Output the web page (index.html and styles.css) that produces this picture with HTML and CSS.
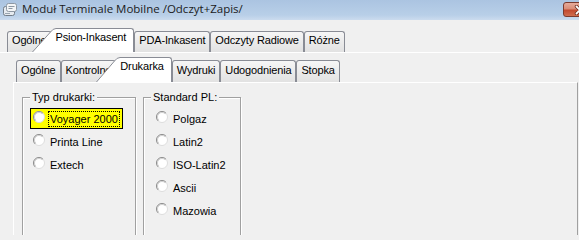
FILE: index.html
```html
<!DOCTYPE html>
<html lang="pl">
<head>
<meta charset="utf-8">
<title>Moduł Terminale Mobilne</title>
<link rel="stylesheet" href="styles.css">
</head>
<body>
<div class="window">
  <div class="titlebar">
    <svg class="app-icon" viewBox="0 0 16 16" aria-hidden="true">
      <rect x="1.5" y="4.5" width="11" height="9" rx="2" fill="#e6ebf0" stroke="#737d88"/>
      <rect x="4.5" y="1.5" width="10" height="8" rx="2" fill="#f3f5f7" stroke="#8d98a4"/>
      <path d="M6.5 4.5h6M6.5 6.5h4" stroke="#8d98a4"/>
      <path d="M3 11.5h5" stroke="#9aa5b0"/>
    </svg>
    <span class="title">Moduł Terminale Mobilne /Odczyt+Zapis/</span>
    <div class="close-btn">
      <svg width="12" height="10" viewBox="0 0 12 10" aria-hidden="true">
        <path d="M2.5,1.5 L9.5,8.5 M9.5,1.5 L2.5,8.5" stroke="#6b2c20" stroke-width="3.4" stroke-linecap="round"/>
        <path d="M2.5,1.5 L9.5,8.5 M9.5,1.5 L2.5,8.5" stroke="#fff" stroke-width="1.8" stroke-linecap="round"/>
      </svg>
    </div>
  </div>

  <div class="pagecontrol">
    <div class="tabs tabs-top">
      <div class="tab">Ogólne</div>
      <div class="tab-active">
        <svg class="tab-slant" width="24" height="24" viewBox="0 0 24 24" aria-hidden="true">
          <path d="M0.5,24 L18.5,4 Q21,0.5 24,0.5 L24,24 Z" fill="#fff"/>
          <path d="M0.5,24 L18.5,4 Q21,0.5 24,0.5" fill="none" stroke="#898c95"/>
        </svg>
        <span class="tab-label">Psion-Inkasent</span>
      </div>
      <div class="tab">PDA-Inkasent</div>
      <div class="tab">Odczyty Radiowe</div>
      <div class="tab">Różne</div>
    </div>

    <div class="outer-panel">
      <div class="pagecontrol inner">
        <div class="tabs tabs-sub">
          <div class="tab">Ogólne</div>
          <div class="tab">Kontrolne</div>
          <div class="tab-active">
            <svg class="tab-slant" width="24" height="25" viewBox="0 0 24 25" aria-hidden="true">
              <path d="M0.5,25 L18.5,4 Q21,0.5 24,0.5 L24,25 Z" fill="#fff"/>
              <path d="M0.5,25 L18.5,4 Q21,0.5 24,0.5" fill="none" stroke="#898c95"/>
            </svg>
            <span class="tab-label">Drukarka</span>
          </div>
          <div class="tab">Wydruki</div>
          <div class="tab">Udogodnienia</div>
          <div class="tab">Stopka</div>
        </div>

        <div class="inner-panel">
          <div class="groups">
            <fieldset class="group group-printer">
              <legend class="group-title">Typ drukarki:</legend>
              <div class="opt-row">
                <label class="opt opt-hl">
                  <svg class="radio" viewBox="0 0 12 12" aria-hidden="true"><circle cx="6" cy="6" r="5.5" fill="#fff" stroke="#dcdcdc"/><path d="M2.1,9.9 A5.5,5.5 0 0 1 9.9,2.1" fill="none" stroke="#8c8c8c"/><path d="M2.8,9.2 A4.5,4.5 0 0 1 9.2,2.8" fill="none" stroke="#cfcfcf"/></svg>
                  <span class="opt-text focus">Voyager 2000</span>
                </label>
              </div>
              <div class="opt-row">
                <label class="opt">
                  <svg class="radio" viewBox="0 0 12 12" aria-hidden="true"><circle cx="6" cy="6" r="5.5" fill="#fff" stroke="#dcdcdc"/><path d="M2.1,9.9 A5.5,5.5 0 0 1 9.9,2.1" fill="none" stroke="#8c8c8c"/><path d="M2.8,9.2 A4.5,4.5 0 0 1 9.2,2.8" fill="none" stroke="#cfcfcf"/></svg>
                  <span class="opt-text">Printa Line</span>
                </label>
              </div>
              <div class="opt-row">
                <label class="opt">
                  <svg class="radio" viewBox="0 0 12 12" aria-hidden="true"><circle cx="6" cy="6" r="5.5" fill="#fff" stroke="#dcdcdc"/><path d="M2.1,9.9 A5.5,5.5 0 0 1 9.9,2.1" fill="none" stroke="#8c8c8c"/><path d="M2.8,9.2 A4.5,4.5 0 0 1 9.2,2.8" fill="none" stroke="#cfcfcf"/></svg>
                  <span class="opt-text">Extech</span>
                </label>
              </div>
            </fieldset>

            <fieldset class="group group-std">
              <legend class="group-title">Standard PL:</legend>
              <div class="opt-row">
                <label class="opt">
                  <svg class="radio" viewBox="0 0 12 12" aria-hidden="true"><circle cx="6" cy="6" r="5.5" fill="#fff" stroke="#dcdcdc"/><path d="M2.1,9.9 A5.5,5.5 0 0 1 9.9,2.1" fill="none" stroke="#8c8c8c"/><path d="M2.8,9.2 A4.5,4.5 0 0 1 9.2,2.8" fill="none" stroke="#cfcfcf"/></svg>
                  <span class="opt-text">Polgaz</span>
                </label>
              </div>
              <div class="opt-row">
                <label class="opt">
                  <svg class="radio" viewBox="0 0 12 12" aria-hidden="true"><circle cx="6" cy="6" r="5.5" fill="#fff" stroke="#dcdcdc"/><path d="M2.1,9.9 A5.5,5.5 0 0 1 9.9,2.1" fill="none" stroke="#8c8c8c"/><path d="M2.8,9.2 A4.5,4.5 0 0 1 9.2,2.8" fill="none" stroke="#cfcfcf"/></svg>
                  <span class="opt-text">Latin2</span>
                </label>
              </div>
              <div class="opt-row">
                <label class="opt">
                  <svg class="radio" viewBox="0 0 12 12" aria-hidden="true"><circle cx="6" cy="6" r="5.5" fill="#fff" stroke="#dcdcdc"/><path d="M2.1,9.9 A5.5,5.5 0 0 1 9.9,2.1" fill="none" stroke="#8c8c8c"/><path d="M2.8,9.2 A4.5,4.5 0 0 1 9.2,2.8" fill="none" stroke="#cfcfcf"/></svg>
                  <span class="opt-text">ISO-Latin2</span>
                </label>
              </div>
              <div class="opt-row">
                <label class="opt">
                  <svg class="radio" viewBox="0 0 12 12" aria-hidden="true"><circle cx="6" cy="6" r="5.5" fill="#fff" stroke="#dcdcdc"/><path d="M2.1,9.9 A5.5,5.5 0 0 1 9.9,2.1" fill="none" stroke="#8c8c8c"/><path d="M2.8,9.2 A4.5,4.5 0 0 1 9.2,2.8" fill="none" stroke="#cfcfcf"/></svg>
                  <span class="opt-text">Ascii</span>
                </label>
              </div>
              <div class="opt-row">
                <label class="opt">
                  <svg class="radio" viewBox="0 0 12 12" aria-hidden="true"><circle cx="6" cy="6" r="5.5" fill="#fff" stroke="#dcdcdc"/><path d="M2.1,9.9 A5.5,5.5 0 0 1 9.9,2.1" fill="none" stroke="#8c8c8c"/><path d="M2.8,9.2 A4.5,4.5 0 0 1 9.2,2.8" fill="none" stroke="#cfcfcf"/></svg>
                  <span class="opt-text">Mazowia</span>
                </label>
              </div>
            </fieldset>
          </div>
        </div>
      </div>
    </div>
  </div>
</div>
</body>
</html>
```

FILE: styles.css
```css
html, body {
  margin: 0;
  padding: 0;
}

body {
  width: 579px;
  height: 235px;
  overflow: hidden;
  background: #f0f0f0;
  font-family: "Liberation Sans", Arial, sans-serif;
  font-size: 11px;
  color: #000;
}

.window {
  width: 579px;
}

/* ---------- title bar ---------- */
.titlebar {
  display: flex;
  align-items: flex-start;
  height: 20px;
  background: linear-gradient(to bottom, #abc4e1 0%, #b8cfe8 75%, #cbdbee 100%);
}

.app-icon {
  flex: none;
  width: 16px;
  height: 16px;
  margin: 2px 0 0 2px;
}

.title {
  margin-left: 4px;
  font-family: "Open Sans", "Noto Sans", sans-serif;
  font-size: 11.5px;
  line-height: 18px;
  color: #1b1b1b;
  white-space: nowrap;
}

.close-btn {
  flex: none;
  box-sizing: border-box;
  margin: 2px -18px 0 auto;
  width: 34px;
  height: 15px;
  border: 1px solid #7b3b2e;
  border-radius: 3px;
  background: linear-gradient(to bottom, #e6ab9b 0%, #d98d77 45%, #c2492f 55%, #cf6d4f 100%);
  display: flex;
  align-items: center;
  justify-content: center;
}

/* ---------- tabs ---------- */
.tabs {
  display: flex;
  align-items: flex-end;
}

.tabs-top {
  margin-top: 8px;
  padding-left: 7px;
  height: 24px;
}

.tabs-sub {
  margin-top: 4px;
  padding-left: 3px;
  height: 25px;
}

.tab {
  box-sizing: border-box;
  border: 1px solid #898c95;
  border-bottom: 0;
  border-radius: 3px 3px 0 0;
  background: linear-gradient(to bottom, #f6f6f6 0%, #ebebeb 50%, #e2e2e2 100%);
  padding: 2px 4px 0;
  line-height: 13px;
  white-space: nowrap;
  letter-spacing: -0.15px;
}

.tabs-top .tab {
  height: 21px;
}

.tabs-sub .tab {
  height: 22px;
  padding-top: 3px;
}

.tab-active {
  display: flex;
  align-items: stretch;
  position: relative;
  z-index: 1;
  margin-left: -20px;
}

.tabs-top .tab-active {
  height: 24px;
}

.tabs-sub .tab-active {
  height: 25px;
}

.tab-slant {
  flex: none;
  display: block;
}

.tab-label {
  background: #fff;
  border-top: 1px solid #898c95;
  border-right: 1px solid #898c95;
  border-radius: 0 3px 0 0;
  padding: 2px 7px 0 0;
  line-height: 13px;
  white-space: nowrap;
  letter-spacing: -0.15px;
}

/* ---------- panels ---------- */
.outer-panel {
  border-top: 1px solid #fff;
}

.inner {
  margin: 0 1px 0 13px;
}

.inner-panel {
  box-sizing: border-box;
  height: 170px;
  border-top: 1px solid #fff;
  border-left: 1px solid #fff;
  border-right: 1px solid #a0a0a0;
  padding: 8px 0 0 8px;
}

/* ---------- group boxes ---------- */
.groups {
  display: flex;
  align-items: flex-start;
  gap: 7px;
}

.group {
  box-sizing: border-box;
  margin: 0;
  min-width: 0;
  height: 160px;
  padding: 3px 0 0;
  border: 1px solid #a0a0a0;
  box-shadow: inset 1px 1px 0 #fff, 1px 1px 0 #fff;
}

.group-printer {
  width: 114px;
}

.group-std {
  width: 98px;
}

.group-title {
  margin-left: 7px;
  padding: 0 2px;
  line-height: 13px;
  background: #f0f0f0;
}

.opt-row {
  display: flex;
  align-items: center;
  height: 23px;
  padding-left: 7px;
}

.group-std .opt-row {
  padding-left: 9px;
}

.opt {
  display: flex;
  align-items: center;
  gap: 4px;
  box-sizing: border-box;
  height: 21px;
  border: 1px solid transparent;
  padding: 0 3px 0 2px;
  white-space: nowrap;
}

.opt-hl {
  background: #ffff00;
  border-color: #000;
}

.radio {
  flex: none;
  display: block;
  width: 12px;
  height: 12px;
  margin-bottom: 3px;
}

.opt-text {
  padding: 0 1px;
  line-height: 14px;
}

.focus {
  outline: 1px dotted #000;
}
```
